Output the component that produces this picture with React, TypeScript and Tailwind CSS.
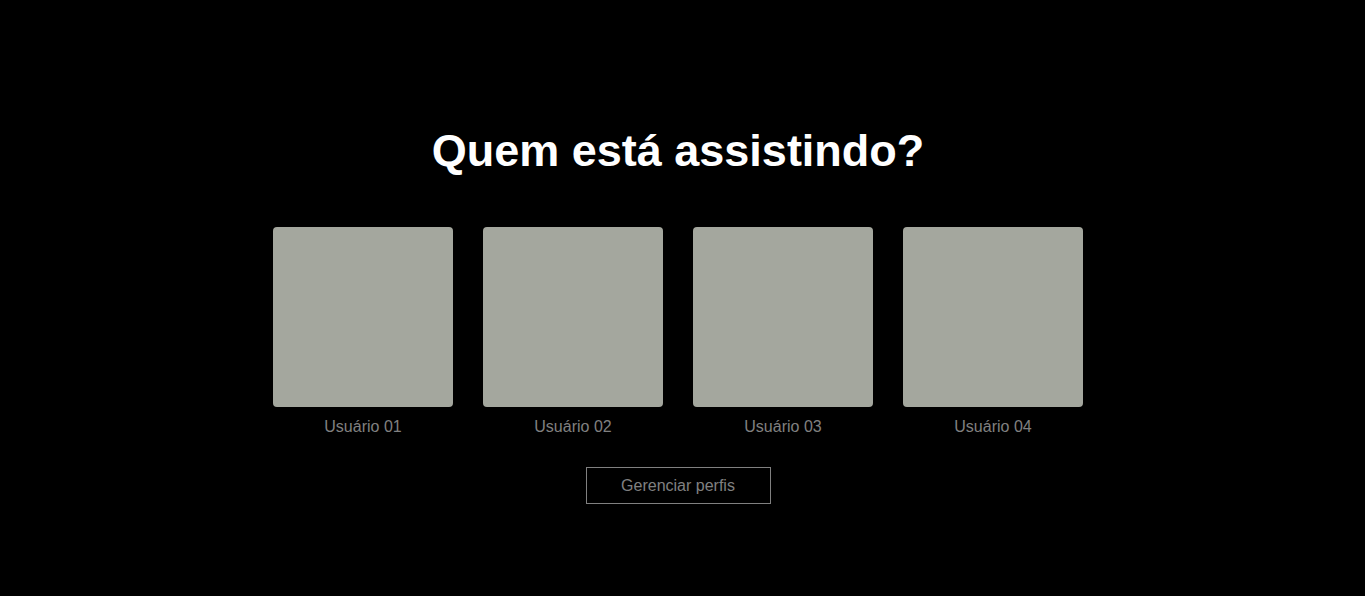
import React from "react";

const profiles = ["Usuário 01", "Usuário 02", "Usuário 03", "Usuário 04"];

const App: React.FC = () => {
	return (
		<div className="min-h-[596px] w-full bg-black pr-[9px] font-['Liberation_Sans',Arial,sans-serif]">
			<div className="flex flex-col items-center pt-[125px]">
				<h1 className="text-[45px] font-bold leading-[52px] text-white">Quem está assistindo?</h1>
				<ul className="mt-[50px] flex gap-[30px]">
					{profiles.map((name) => (
						<li key={name} className="flex flex-col items-center">
							<div className="h-[180px] w-[180px] rounded-[4px] bg-[#a4a79e]" />
							<span className="mt-[11px] text-base leading-[18px] text-[#808080]">{name}</span>
						</li>
					))}
				</ul>
				<button className="mt-[31px] flex h-[37px] w-[185px] items-center justify-center border border-[#808080] text-base text-[#808080]">
					Gerenciar perfis
				</button>
			</div>
		</div>
	);
};

export default App;
